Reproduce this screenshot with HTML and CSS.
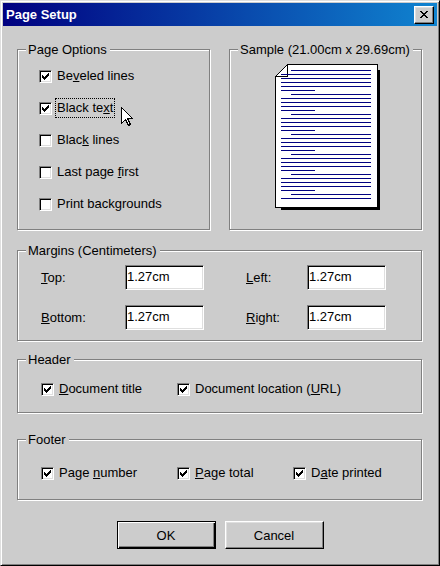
FILE: index.html
```html
<!DOCTYPE html>
<html>
<head>
<meta charset="utf-8">
<title>Page Setup</title>
<link rel="stylesheet" href="styles.css">
</head>
<body>
<div class="window">
  <div class="titlebar">
    <span class="title">Page Setup</span>
    <button class="close" aria-label="Close">
      <svg width="8" height="7" viewBox="0 0 8 7" shape-rendering="crispEdges"><path fill="#000" d="M0 0h2v1H0z M6 0h2v1H6z M1 1h2v1H1z M5 1h2v1H5z M2 2h4v1H2z M3 3h2v1H3z M2 4h4v1H2z M1 5h2v1H1z M5 5h2v1H5z M0 6h2v1H0z M6 6h2v1H6z"/></svg>
    </button>
  </div>
  <div class="dialog">
    <div class="top-row">
      <fieldset class="group half">
        <legend>Page Options</legend>
        <div class="options">
          <div class="opt"><span class="check"><svg class="tick" width="7" height="7" viewBox="0 0 7 7" shape-rendering="crispEdges"><path d="M0 2h1v3H0z M1 3h1v3H1z M2 4h1v3H2z M3 3h1v3H3z M4 2h1v3H4z M5 1h1v3H5z M6 0h1v3H6z"/></svg></span><span class="lbl">Be<u>v</u>eled lines</span></div>
          <div class="opt"><span class="check"><svg class="tick" width="7" height="7" viewBox="0 0 7 7" shape-rendering="crispEdges"><path d="M0 2h1v3H0z M1 3h1v3H1z M2 4h1v3H2z M3 3h1v3H3z M4 2h1v3H4z M5 1h1v3H5z M6 0h1v3H6z"/></svg></span><span class="lbl focus">Black te<u>x</u>t</span></div>
          <div class="opt"><span class="check"></span><span class="lbl">Blac<u>k</u> lines</span></div>
          <div class="opt"><span class="check"></span><span class="lbl">Last page <u>f</u>irst</span></div>
          <div class="opt"><span class="check"></span><span class="lbl">Print backgrounds</span></div>
        </div>
      </fieldset>
      <fieldset class="group half">
        <legend>Sample (21.00cm x 29.69cm)</legend>
        <svg class="preview" width="105" height="146" viewBox="0 0 105 146" shape-rendering="crispEdges">
          <rect x="6" y="6" width="99" height="140" fill="#000"/>
          <path d="M12.5 0.5H102.5V143.5H0.5V12.5Z" fill="#fff" stroke="#000" stroke-width="1"/>
          <path d="M0.5 12.5L12.5 0.5V12.5Z" fill="#fff" stroke="#000" stroke-width="1"/>
          <path stroke="#000080" stroke-width="1" fill="none" d="M16 6.5h80 M6 10.5h90 M6 14.5h90 M6 18.5h90 M6 22.5h90 M6 26.5h34 M16 30.5h80 M6 34.5h90 M6 38.5h90 M6 42.5h90 M6 46.5h34 M16 50.5h80 M6 54.5h90 M6 58.5h90 M6 62.5h90 M6 66.5h34 M16 70.5h80 M6 74.5h90 M6 78.5h90 M6 82.5h90 M6 86.5h34 M16 90.5h80 M6 94.5h90 M6 98.5h90 M6 102.5h90 M6 106.5h34 M16 110.5h80 M6 114.5h90 M6 118.5h90 M6 122.5h90 M6 126.5h34 M16 130.5h80 M6 134.5h90"/>
        </svg>
      </fieldset>
    </div>

    <fieldset class="group gap-margins">
      <legend>Margins (Centimeters)</legend>
      <div class="margins">
        <label class="mlabel"><u>T</u>op:</label>
        <input class="field" type="text" value="1.27cm">
        <label class="mlabel"><u>L</u>eft:</label>
        <input class="field" type="text" value="1.27cm">
        <label class="mlabel"><u>B</u>ottom:</label>
        <input class="field" type="text" value="1.27cm">
        <label class="mlabel"><u>R</u>ight:</label>
        <input class="field" type="text" value="1.27cm">
      </div>
    </fieldset>

    <fieldset class="group gap-header">
      <legend>Header</legend>
      <div class="row header-row">
        <div class="opt col1"><span class="check"><svg class="tick" width="7" height="7" viewBox="0 0 7 7" shape-rendering="crispEdges"><path d="M0 2h1v3H0z M1 3h1v3H1z M2 4h1v3H2z M3 3h1v3H3z M4 2h1v3H4z M5 1h1v3H5z M6 0h1v3H6z"/></svg></span><span class="lbl"><u>D</u>ocument title</span></div>
        <div class="opt"><span class="check"><svg class="tick" width="7" height="7" viewBox="0 0 7 7" shape-rendering="crispEdges"><path d="M0 2h1v3H0z M1 3h1v3H1z M2 4h1v3H2z M3 3h1v3H3z M4 2h1v3H4z M5 1h1v3H5z M6 0h1v3H6z"/></svg></span><span class="lbl">Document location (<u>U</u>RL)</span></div>
      </div>
    </fieldset>

    <fieldset class="group gap-footer">
      <legend>Footer</legend>
      <div class="row footer-row">
        <div class="opt col1"><span class="check"><svg class="tick" width="7" height="7" viewBox="0 0 7 7" shape-rendering="crispEdges"><path d="M0 2h1v3H0z M1 3h1v3H1z M2 4h1v3H2z M3 3h1v3H3z M4 2h1v3H4z M5 1h1v3H5z M6 0h1v3H6z"/></svg></span><span class="lbl">Page <u>n</u>umber</span></div>
        <div class="opt col2"><span class="check"><svg class="tick" width="7" height="7" viewBox="0 0 7 7" shape-rendering="crispEdges"><path d="M0 2h1v3H0z M1 3h1v3H1z M2 4h1v3H2z M3 3h1v3H3z M4 2h1v3H4z M5 1h1v3H5z M6 0h1v3H6z"/></svg></span><span class="lbl"><u>P</u>age total</span></div>
        <div class="opt"><span class="check"><svg class="tick" width="7" height="7" viewBox="0 0 7 7" shape-rendering="crispEdges"><path d="M0 2h1v3H0z M1 3h1v3H1z M2 4h1v3H2z M3 3h1v3H3z M4 2h1v3H4z M5 1h1v3H5z M6 0h1v3H6z"/></svg></span><span class="lbl">D<u>a</u>te printed</span></div>
      </div>
    </fieldset>

    <div class="buttons">
      <button class="btn default">OK</button>
      <button class="btn">Cancel</button>
    </div>
  </div>

  <svg class="cursor" width="13" height="20" viewBox="0 0 13 20" shape-rendering="crispEdges">
    <path d="M0.5 0.5V16.5L4.5 12.5L7.5 18.5L9.5 17.5L6.5 11.5H11.5Z" fill="#fff" stroke="#000" stroke-width="1" stroke-linejoin="miter"/>
  </svg>
</div>
</body>
</html>
```

FILE: styles.css
```css
* { box-sizing: border-box; }

html, body {
  margin: 0;
  padding: 0;
}

body {
  width: 440px;
  height: 566px;
  overflow: hidden;
  background: #cccccc;
  font-family: "Liberation Sans", Arial, sans-serif;
  font-size: 13px;
  color: #000;
}

.window {
  position: relative;
  width: 440px;
  height: 566px;
  padding: 2px;
  background: #cccccc;
  border: 1px solid;
  border-color: #dfdfdf #000 #000 #dfdfdf;
  box-shadow: inset 1px 1px #fff, inset -1px -1px #808080;
}

.titlebar {
  height: 23px;
  display: flex;
  align-items: center;
  justify-content: space-between;
  padding: 0 3px;
  background: linear-gradient(to right, #000080, #1084d0);
}

.title {
  color: #fff;
  font-weight: bold;
  font-size: 13px;
  line-height: 16px;
}

.close {
  width: 20px;
  height: 18px;
  padding: 0;
  display: flex;
  align-items: center;
  justify-content: center;
  background: #cccccc;
  border: 1px solid;
  border-color: #fff #000 #000 #fff;
  box-shadow: inset -1px -1px #808080, inset 1px 1px #dfdfdf;
}

.close svg { display: block; }

.dialog {
  padding: 16px 15px 0 14px;
}

.top-row {
  display: flex;
  gap: 19px;
}

.group {
  margin: 0;
  padding: 0;
  min-width: 0;
  border: 1px solid #808080;
  box-shadow: inset 1px 1px #fff, 1px 1px #fff;
}

.group legend {
  margin-left: 8px;
  padding: 0 3px 0 2px;
  line-height: 15px;
  background: #cccccc;
}

.half { width: 193px; }

.gap-margins { margin-top: 13px; }
.gap-header { margin-top: 11px; }
.gap-footer { margin-top: 19px; }

.options {
  display: flex;
  flex-direction: column;
  gap: 12px;
  padding: 9px 0 15px 21px;
}

.opt {
  display: flex;
  align-items: center;
  height: 20px;
  white-space: nowrap;
}

.check {
  flex: none;
  width: 13px;
  height: 13px;
  margin-right: 3px;
  display: flex;
  align-items: center;
  justify-content: center;
  background: #fff;
  border: 1px solid;
  border-color: #808080 #fff #fff #808080;
  box-shadow: inset 1px 1px #000, inset -1px -1px #dfdfdf;
}

.tick { display: block; fill: #000; }

.lbl {
  line-height: 18px;
  padding: 0 1px;
  border: 1px solid transparent;
}

.lbl.focus {
  border: 1px dotted #000;
}

.preview {
  display: block;
  margin: 7px 0 0 45px;
}

.margins {
  display: grid;
  grid-template-columns: 84px 121px 61px 79px;
  row-gap: 15px;
  align-items: center;
  padding: 7px 0 10px 23px;
}

.mlabel {
  line-height: 16px;
}

.field {
  width: 79px;
  height: 25px;
  margin: 0;
  padding: 0 0 2px 1px;
  font-family: "Liberation Sans", Arial, sans-serif;
  font-size: 13px;
  color: #000;
  background: #fff;
  outline: none;
  border: 1px solid;
  border-color: #808080 #fff #fff #808080;
  box-shadow: inset 1px 1px #000, inset -1px -1px #dfdfdf;
}

.row {
  display: flex;
  padding-left: 23px;
}

.header-row { padding-top: 12px; padding-bottom: 13px; }
.footer-row { padding-top: 16px; padding-bottom: 16px; }

.col1 { width: 136px; }
.col2 { width: 116px; }

.buttons {
  display: flex;
  justify-content: center;
  gap: 9px;
  margin-top: 21px;
  padding-left: 1px;
}

.btn {
  width: 99px;
  height: 28px;
  padding: 0;
  font-family: "Liberation Sans", Arial, sans-serif;
  font-size: 13px;
  color: #000;
  background: #cccccc;
  border: 1px solid;
  border-color: #fff #000 #000 #fff;
  box-shadow: inset -1px -1px #808080, inset 1px 1px #dfdfdf;
}

.btn.default {
  border-color: #000;
  box-shadow: inset 1px 1px #fff, inset -1px -1px #000, inset -2px -2px #808080;
}

.cursor {
  position: absolute;
  left: 120px;
  top: 106px;
  display: block;
}
```
